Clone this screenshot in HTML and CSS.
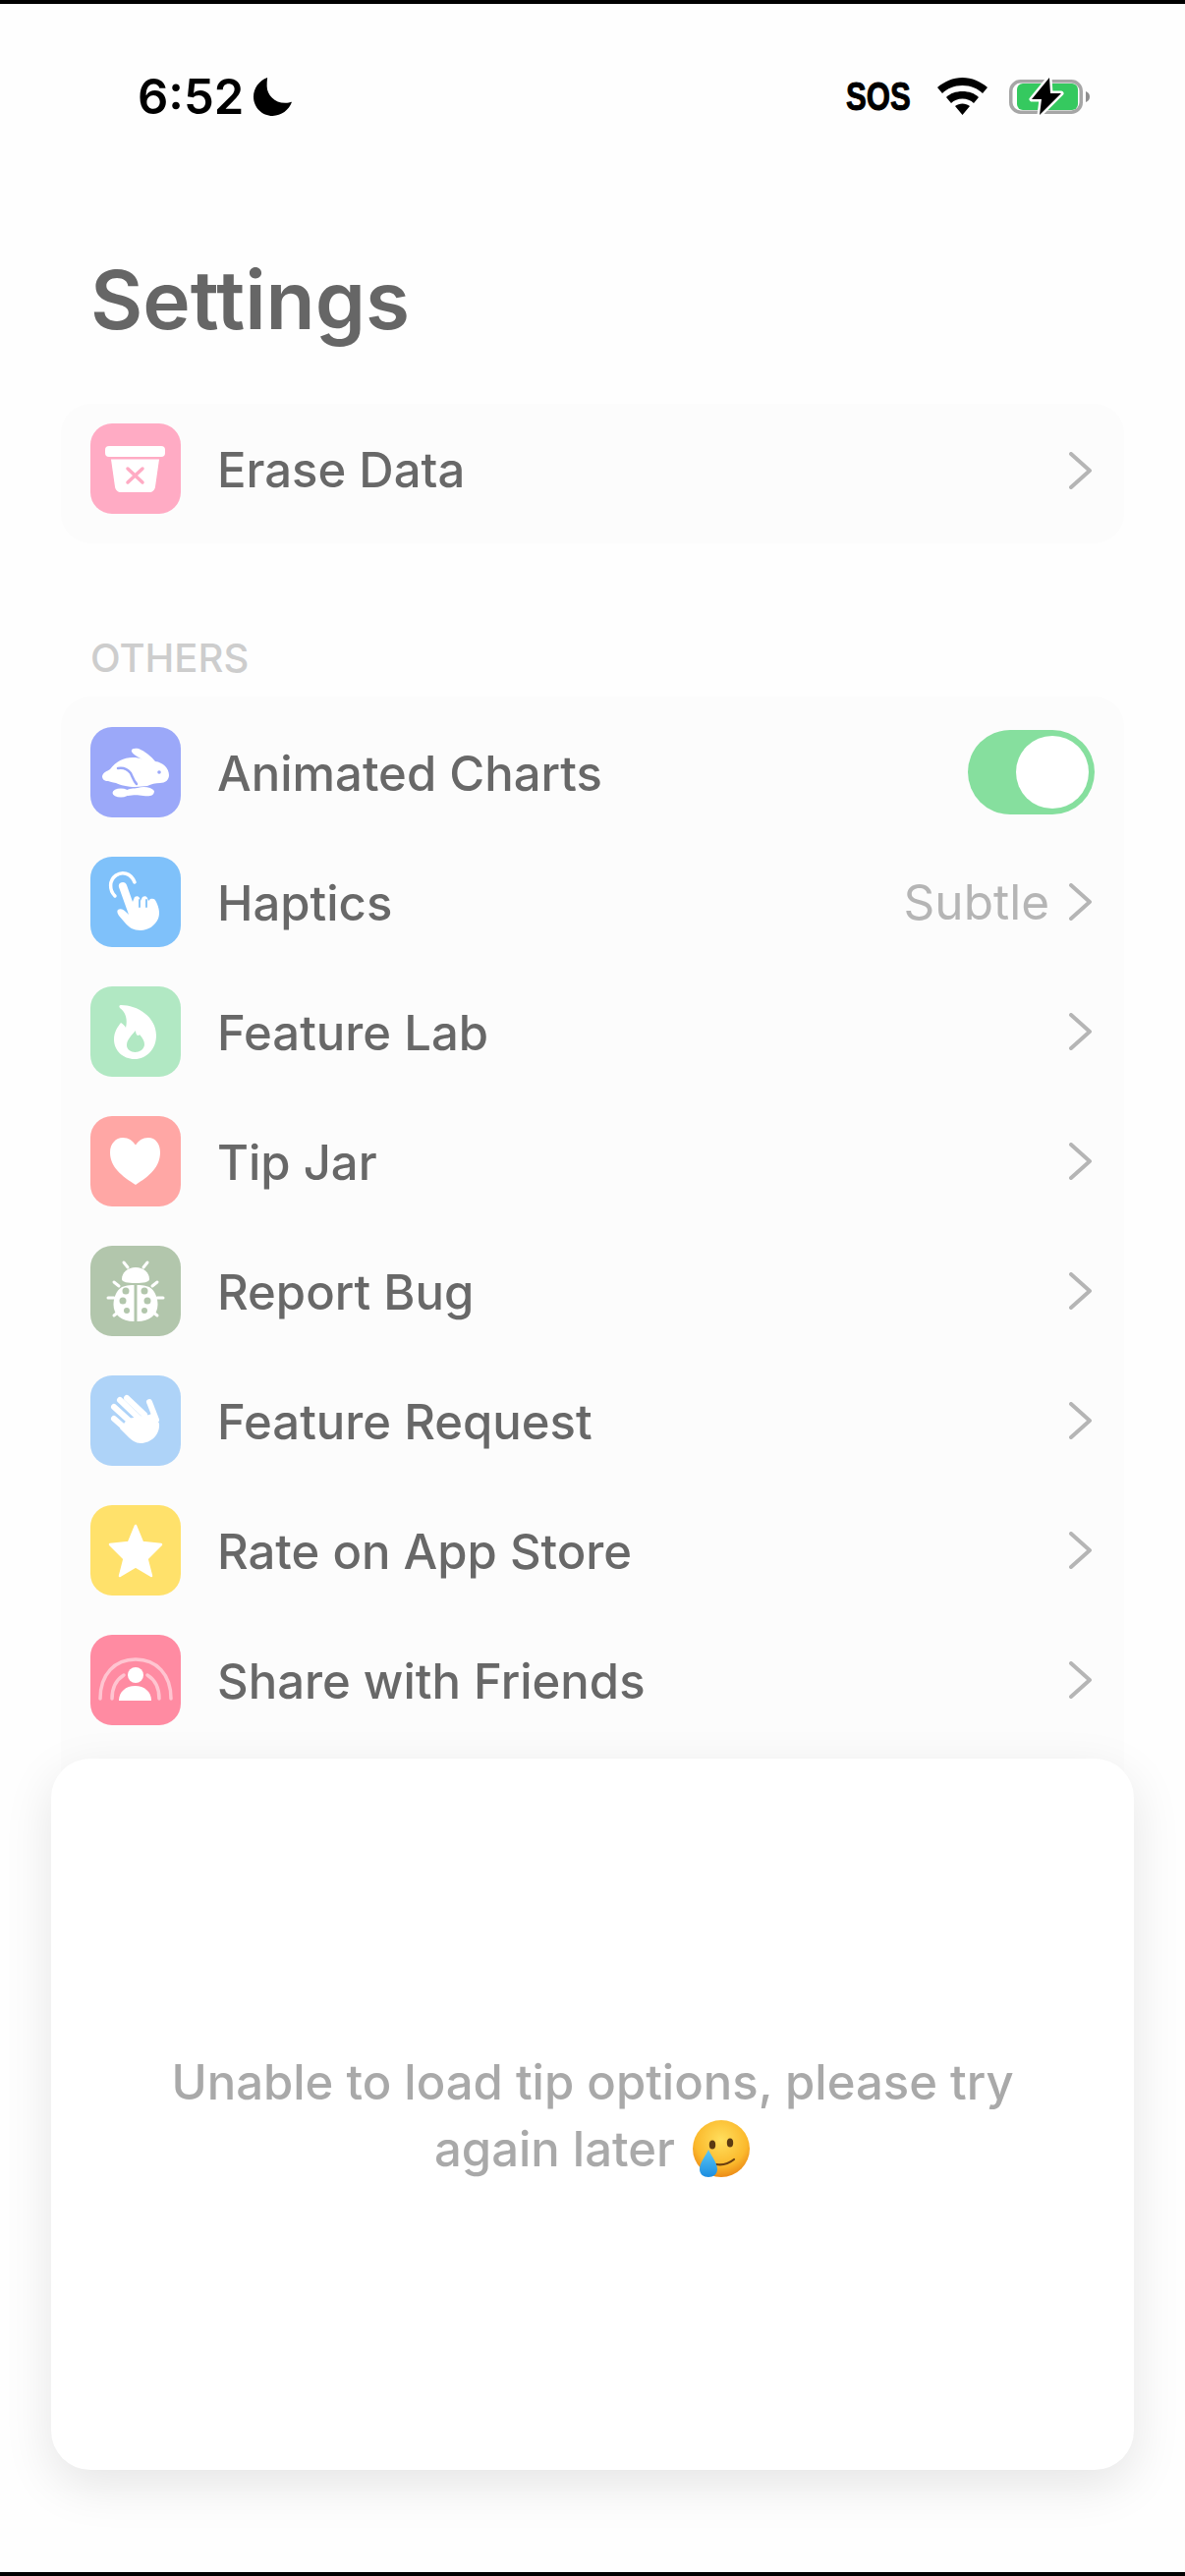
FILE: index.html
```html
<!DOCTYPE html>
<html lang="en">
<head>
    <meta charset="UTF-8">
    <meta name="viewport" content="width=device-width, initial-scale=1.0">
    <title>Settings</title>
    <link rel="stylesheet" href="styles.css">
</head>
<body>
    <div class="screen">
        <header class="status-bar">
            <div class="status-left">
                <span class="clock">6:52</span>
                <svg class="moon" viewBox="0 0 40 40"><path d="M14.500 0C6 3 0 11 0 20c0 11 9 20 20 20 9 0 17-6 20-14.500-2 .5-4 1-7 1C22 26.500 14 18 14 9c0-3 0-6 .5-9z"/></svg>
            </div>
            <div class="status-right">
                <span class="sos">SOS</span>
                <svg class="wifi" viewBox="0 0 51 38"><path d="M0 10C7 4 16 0 25.500 0S44 4 51 10l-5 6C41 11 34 8 25.500 8S10 11 5 16zM9 20c4-4 10-6 16.500-6S38 16 42 20l-5 6c-3-3-7-4.500-11.500-4.500S17 23 14 26zM18 29c2-1.500 5-2.500 7.500-2.500S31 27.500 33 29l-7.500 9z"/></svg>
                <svg class="battery" viewBox="0 0 82 40">
                    <rect x="1.750" y="4.750" width="71.500" height="31.500" rx="10" fill="none" stroke="#a6a6a6" stroke-width="3.500"/>
                    <rect x="8" y="7" width="62" height="27" rx="6" fill="#35c95f"/>
                    <path d="M78 15c3 1 4 3 4 5.500s-1 4.500-4 5.500z" fill="#8f8f8f"/>
                    <path d="M41 1 L23 23 H33 L31 39 L53 17 H42 Z" fill="#000" stroke="#fff" stroke-width="5" stroke-linejoin="round" paint-order="stroke"/>
                </svg>
            </div>
        </header>

        <main class="content">
            <h1 class="title">Settings</h1>

            <section class="card">
                <div class="row">
                    <span class="app-icon pink">
                        <svg viewBox="0 0 92 92"><rect x="15" y="23" width="61" height="11" rx="4" fill="#fff"/><path d="M21 36.500h49l-4 28c-.5 3.500-3 5.500-6 5.500H31c-3 0-5.500-2-6-5.500z" fill="#fff"/><path d="M38 46l15 14M53 46L38 60" stroke="#ffabc4" stroke-width="3.500" stroke-linecap="round"/></svg>
                    </span>
                    <span class="label">Erase Data</span>
                    <svg class="chevron" viewBox="0 0 24 38"><path d="M2 2l19 17L2 36"/></svg>
                </div>
            </section>

            <h2 class="section-title">OTHERS</h2>

            <section class="card card-long">
                <div class="row">
                    <span class="app-icon indigo">
                        <svg viewBox="0 0 92 92">
                            <path d="M12 50C13 46 17 45 20 43C26 35 34 31 43 31C47 31 50 31.500 53 33C48 30 43 28 42 25C41 22 45 21 49 22C56 25 62 30 66 35C74 36 80 42 80 49C80 54 76 57 71 57C66 57 62 58 58 60L46 61C38 61 30 59 26 57C22 56 20 56 18 55C14 55 12 53 12 50Z" fill="#fff"/>
                            <ellipse cx="31" cy="67" rx="8.500" ry="4.500" fill="#fff"/>
                            <path d="M36 65c3-3 8-2 12-3 6-2 14-1 17 3 0 5-5 6-11 5-6-1-10-1-16 0-3-1-3-3-2-5z" fill="#fff"/>
                            <path d="M28 42c6-1 10 1 13 5 2 4 3 8 6 11" fill="none" stroke="#9ba8f9" stroke-width="2.500" stroke-linecap="round"/>
                            <circle cx="70" cy="46" r="1.800" fill="#9ba8f9"/>
                        </svg>
                    </span>
                    <span class="label">Animated Charts</span>
                    <span class="toggle"><span class="knob"></span></span>
                </div>
                <div class="row">
                    <span class="app-icon sky">
                        <svg viewBox="0 0 92 92">
                            <path d="M25 40c-6-6-6-16 1-21 6-4 15-3 19 7" fill="none" stroke="#fff" stroke-width="3.500" stroke-linecap="round"/>
                            <path d="M30 27c3-2 6-1 7 2l6 17 2-5c2-1 4-1 5 1l1 3 2-4c2-1 4-1 5 1l1 3 2-2c3-1 5 0 6 3 3 6 4 12 2 17-3 7-10 12-18 12-7 0-12-3-16-8L29 60c-2-3-2-5-1-6 3-2 6 0 9 3l2 2-10-28c-.5-2 0-3 1-4z" fill="#fff"/>
                            <path d="M50 44v7M57 44v7" stroke="#7fc1fa" stroke-width="1.800" stroke-linecap="round"/>
                        </svg>
                    </span>
                    <span class="label">Haptics</span>
                    <span class="value">Subtle</span>
                    <svg class="chevron" viewBox="0 0 24 38"><path d="M2 2l19 17L2 36"/></svg>
                </div>
                <div class="row">
                    <span class="app-icon mint">
                        <svg viewBox="0 0 92 92"><path fill-rule="evenodd" d="M31 19c17 0 36 12 36 31 0 14-10 24-22 24-12 0-21-9-21-20 0-8 4-13 7-17 2 1 4 3 5 5 2-8 0-16-6-20-1-1-1-3 1-3zM46 45c0 5 3 6 4 4 3 3 5 7 5 10 0 5-5 8-9.500 8C41 67 37 64 37 60c0-6 5-10 9-15z" fill="#fff"/></svg>
                    </span>
                    <span class="label">Feature Lab</span>
                    <svg class="chevron" viewBox="0 0 24 38"><path d="M2 2l19 17L2 36"/></svg>
                </div>
                <div class="row">
                    <span class="app-icon coral">
                        <svg viewBox="0 0 92 92"><path d="M46 70C32 61 20 52 20 37c0-9 6-15 13-15 6 0 10 3 13 7.500C49 25 53 22 59 22c7 0 12 6 12 15 0 15-11 24-25 33z" fill="#fff"/></svg>
                    </span>
                    <span class="label">Tip Jar</span>
                    <svg class="chevron" viewBox="0 0 24 38"><path d="M2 2l19 17L2 36"/></svg>
                </div>
                <div class="row">
                    <span class="app-icon sage">
                        <svg viewBox="0 0 92 92">
                            <path d="M32 34c0-7 6-12 14-12s14 5 14 12c0 3-6 4-14 4s-14-1-14-4z" fill="#fff"/>
                            <path d="M44.500 40c-7 0-12 1-15 4-4 4-6 10-6 16 0 10 8 17 21 17zM47.500 40c7 0 12 1 15 4 4 4 6 10 6 16 0 10-8 17-21 17z" fill="#fff"/>
                            <path d="M34 17l4 5M58 17l-4 5M24 37l5 4M68 37l-5 4M18 53h6M74 53h-6M24 71l5-4M68 71l-5-4" stroke="#fff" stroke-width="3" stroke-linecap="round" fill="none"/>
                            <g fill="#b2c6ac"><circle cx="36" cy="46" r="3.500"/><circle cx="33" cy="56" r="3.500"/><circle cx="37" cy="66" r="3"/><circle cx="55" cy="46" r="3.500"/><circle cx="58" cy="56" r="3.500"/><circle cx="55" cy="66" r="3"/></g>
                        </svg>
                    </span>
                    <span class="label">Report Bug</span>
                    <svg class="chevron" viewBox="0 0 24 38"><path d="M2 2l19 17L2 36"/></svg>
                </div>
                <div class="row">
                    <span class="app-icon ice">
                        <svg viewBox="0 0 92 92">
                            <path d="M24 44l16 14M24 32l22 20M30 25l22 21M37 23l18 17" fill="none" stroke="#fff" stroke-width="6" stroke-linecap="round"/>
                            <path d="M60 27l7 18" fill="none" stroke="#fff" stroke-width="6" stroke-linecap="round"/>
                            <path d="M38 44l22-4 4-2 6 11c1 11-8 20-19 20-5 0-9-3-13-7l-8-8z" fill="#fff"/>
                        </svg>
                    </span>
                    <span class="label">Feature Request</span>
                    <svg class="chevron" viewBox="0 0 24 38"><path d="M2 2l19 17L2 36"/></svg>
                </div>
                <div class="row">
                    <span class="app-icon yellow">
                        <svg viewBox="0 0 92 92"><path d="M46 21l7 17 19 2-14.500 14.500L62 72 46 62.500 30 72l4.500-17.500L20 40l19-2z" fill="#fff" stroke="#fff" stroke-width="2.500" stroke-linejoin="round"/></svg>
                    </span>
                    <span class="label">Rate on App Store</span>
                    <svg class="chevron" viewBox="0 0 24 38"><path d="M2 2l19 17L2 36"/></svg>
                </div>
                <div class="row">
                    <span class="app-icon rose">
                        <svg viewBox="0 0 92 92">
                            <path d="M10 65C10 40 25 25 46 25s36 15 36 40" fill="none" stroke="#fff" stroke-opacity=".5" stroke-width="3.500" stroke-linecap="round"/>
                            <path d="M22 65c0-11 4-19 12-24M70 65c0-11-4-19-12-24" fill="none" stroke="#fff" stroke-opacity=".5" stroke-width="3.500" stroke-linecap="round"/>
                            <circle cx="46" cy="41" r="8" fill="#fff"/>
                            <path d="M29 67c0-9 7-15 16.500-15S62 58 62 67z" fill="#fff"/>
                        </svg>
                    </span>
                    <span class="label">Share with Friends</span>
                    <svg class="chevron" viewBox="0 0 24 38"><path d="M2 2l19 17L2 36"/></svg>
                </div>
            </section>
        </main>

        <!-- нижний лист с сообщением -->
        <aside class="sheet">
            <p class="sheet-text">Unable to load tip options, please try again later
                <svg class="emoji" viewBox="0 0 60 60">
                    <defs>
                        <radialGradient id="face" cx="50%" cy="35%" r="65%"><stop offset="0" stop-color="#ffdf5e"/><stop offset=".7" stop-color="#fbb92c"/><stop offset="1" stop-color="#ec8a16"/></radialGradient>
                        <linearGradient id="tear" x1="0" y1="0" x2="0" y2="1"><stop offset="0" stop-color="#5cc8f5"/><stop offset="1" stop-color="#1b8de0"/></linearGradient>
                    </defs>
                    <circle cx="30" cy="30" r="29" fill="url(#face)"/>
                    <ellipse cx="21" cy="26" rx="3.200" ry="4.500" fill="#5b3a12"/>
                    <ellipse cx="39" cy="24" rx="3.200" ry="4.500" fill="#5b3a12"/>
                    <path d="M25 46c6 1 13-1 18-5" fill="none" stroke="#6b3f10" stroke-width="2.200" stroke-linecap="round"/>
                    <path d="M17 31c3 7 9 13 9 20 0 5-4 8-9 8s-9-3-9-8c0-7 6-13 9-20z" fill="url(#tear)"/>
                </svg>
            </p>
        </aside>
    </div>
</body>
</html>
```

FILE: styles.css
```css
* {
    box-sizing: border-box;
}

body {
    margin: 0;
    padding: 0;
    background-color: #fff;
    font-family: 'Inter', 'Liberation Sans', sans-serif;
    color: #686868;
}

.screen {
    position: relative;
    width: 1206px;
    height: 2622px;
    overflow: hidden;
    background-color: #fefefe;
    border-top: 4px solid #000;
    border-bottom: 4px solid #000;
}

.status-bar {
    display: flex;
    justify-content: space-between;
    align-items: center;
    height: 68px;
    margin-top: 60px;
    padding: 0 97px 0 140px;
    color: #000;
}

.status-left {
    display: flex;
    align-items: center;
    gap: 10px;
}

.clock {
    font-size: 49px;
    font-weight: 600;
    line-height: 1;
}

.moon {
    width: 39px;
    height: 39px;
}

.status-right {
    display: flex;
    align-items: center;
}

.sos {
    width: 66px;
    margin-right: 27px;
    font-family: 'Liberation Sans', sans-serif;
    font-size: 41px;
    font-weight: 700;
    line-height: 1;
    white-space: nowrap;
    -webkit-text-stroke: 1px #000;
    transform: scaleX(0.76);
    transform-origin: left center;
}

.wifi {
    width: 51px;
    height: 38px;
    margin-right: 22px;
}

.battery {
    width: 82px;
    height: 40px;
}

.content {
    padding: 0 62px;
}

.title {
    margin: 122px 0 0;
    padding-left: 30px;
    font-size: 82px;
    font-weight: 600;
    line-height: 104px;
    color: #666;
}

.card {
    margin-top: 53px;
    background-color: #fcfcfc;
    border-radius: 30px;
    padding: 20px 0 30px;
}

.card-long {
    margin-top: 17px;
    height: 1120px;
    padding: 11px 0 0;
}

.section-title {
    margin: 95px 0 0;
    padding-left: 30px;
    font-size: 40px;
    font-weight: 500;
    line-height: 44px;
    color: #cdcdcd;
}

.row {
    display: flex;
    align-items: center;
    height: 132px;
    padding: 0 30px;
}

.card > .row:only-child {
    height: 92px;
}

.card > .row:only-child .chevron {
    margin-top: 4px;
}

.app-icon {
    flex: none;
    width: 92px;
    height: 92px;
    border-radius: 22px;
    margin-right: 37px;
}

.app-icon svg {
    display: block;
    width: 92px;
    height: 92px;
}

.pink { background-color: #ffabc4; }
.indigo { background-color: #9ba8f9; }
.sky { background-color: #7fc1fa; }
.mint { background-color: #b1e8c3; }
.coral { background-color: #ffa7a5; }
.sage { background-color: #b2c6ac; }
.ice { background-color: #aed3f8; }
.yellow { background-color: #ffe16b; }
.rose { background-color: #ff8ba2; }

.label {
    flex: 1;
    margin-top: 3px;
    font-size: 49px;
    font-weight: 500;
    line-height: 60px;
}

.value {
    font-size: 49.5px;
    line-height: 60px;
    color: #b5b5b5;
    margin-right: 20px;
}

.chevron {
    flex: none;
    width: 24px;
    height: 38px;
    margin-right: 2px;
    fill: none;
    stroke: #b5b5b5;
    stroke-width: 4;
    stroke-linecap: round;
    stroke-linejoin: round;
}

.toggle {
    flex: none;
    display: flex;
    justify-content: flex-end;
    align-items: center;
    width: 129px;
    height: 86px;
    padding-right: 6px;
    border-radius: 43px;
    background-color: #86df9e;
}

.knob {
    width: 74px;
    height: 74px;
    border-radius: 50%;
    background-color: #fff;
}

.sheet {
    position: absolute;
    left: 52px;
    top: 1786px;
    display: flex;
    align-items: center;
    justify-content: center;
    width: 1102px;
    height: 724px;
    padding: 4px 70px 0;
    background-color: #fff;
    border-radius: 40px;
    box-shadow: 0 16px 50px rgba(0, 0, 0, 0.1);
}

.sheet-text {
    margin: 0;
    width: 900px;
    text-align: center;
    font-size: 49px;
    font-weight: 500;
    line-height: 68px;
    color: #a9a9a9;
}

.emoji {
    width: 60px;
    height: 60px;
    margin-left: 4px;
    vertical-align: -12px;
}
```
